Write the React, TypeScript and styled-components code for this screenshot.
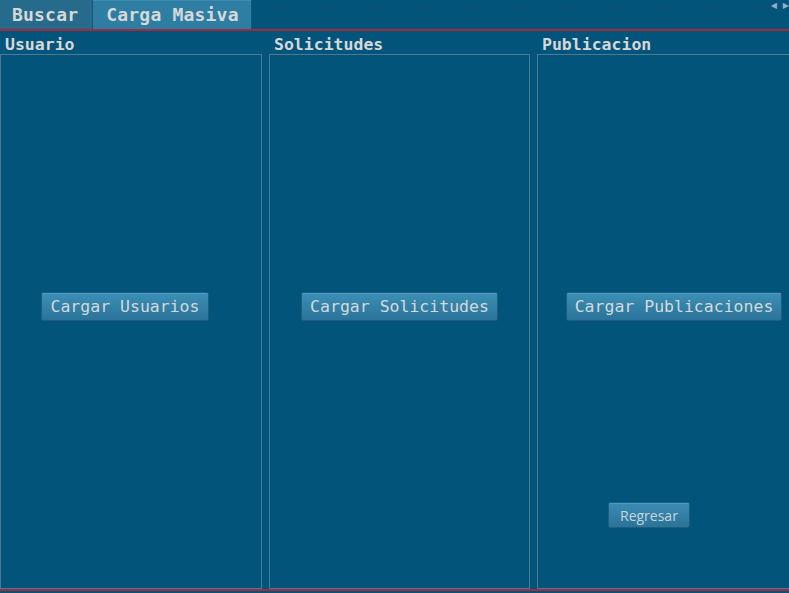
import styled, { createGlobalStyle } from "styled-components";

const Global = createGlobalStyle`
  html, body {
    margin: 0;
    padding: 0;
    background: #03547b;
    overflow: hidden;
  }
`;

const Frame = styled.div`
  width: 789px;
  height: 593px;
  display: flex;
  flex-direction: column;
  background: #03547b;
  overflow: hidden;
`;

const TabBar = styled.div`
  height: 29px;
  display: flex;
  align-items: stretch;
  border-bottom: 2px solid #a3293f;
  background-color: #03547b;
  background-image: radial-gradient(circle, #1b4c68 0.8px, transparent 1.2px);
  background-size: 12px 12px;
  background-position: 4px 2px;
  position: relative;
`;

const Tab = styled.div<{ $active?: boolean }>`
  display: flex;
  align-items: center;
  padding: 0 ${(p) => (p.$active ? "12px 0 13px" : "14px 0 12px")};
  font-family: "DejaVu Sans Mono", monospace;
  font-weight: bold;
  font-size: 18px;
  letter-spacing: 0.2px;
  color: #d6d8d8;
  background: ${(p) => (p.$active ? "#2e7ea4" : "#276b8c")};
  border-right: 1px solid #1c5675;
  box-shadow: ${(p) => (p.$active ? "inset 0 1px 0 #3b8db3" : "none")};
`;

const Scrollers = styled.div`
  position: absolute;
  right: 0;
  top: 1px;
  display: flex;
  gap: 6px;
  font-size: 8px;
  color: #8fb1c4;
  font-family: "DejaVu Sans", sans-serif;
`;

const Body = styled.div`
  flex: 1;
  display: grid;
  grid-template-columns: 262px 261px 280px;
  column-gap: 7px;
  border-bottom: 2px solid #a3293f;
  margin-bottom: 2px;
`;

const Column = styled.div`
  display: flex;
  flex-direction: column;
  min-height: 0;
`;

const Label = styled.div`
  height: 23px;
  padding: 0 0 0 5px;
  display: flex;
  align-items: flex-end;
  font-family: "DejaVu Sans Mono", monospace;
  font-weight: bold;
  font-size: 16.5px;
  color: #d6d8d8;
  line-height: 18px;
`;

const Box = styled.div`
  flex: 1;
  border: 1px solid #4b7a92;
  padding-bottom: 30px;
  display: grid;
  grid-template-rows: 1fr auto 1fr;
  justify-items: center;
`;

const Button = styled.button`
  grid-row: 2;
  height: 29px;
  padding: 0 8px;
  font-family: "DejaVu Sans Mono", monospace;
  font-size: 16.5px;
  color: #d3dadd;
  background: linear-gradient(#3c8fb6, #2b7399);
  border: 1px solid #1d5d80;
  border-radius: 2px;
  box-shadow: inset 0 1px 0 #4e9cc0;
  cursor: pointer;
`;

const Footer = styled.div`
  grid-row: 3;
  justify-self: stretch;
  display: flex;
  align-items: flex-end;
  padding: 0 0 30px 70px;
`;

const SmallButton = styled.button`
  height: 26px;
  padding: 0 11px;
  font-family: "Open Sans", "Noto Sans", sans-serif;
  font-size: 14px;
  color: #c9d5db;
  background: linear-gradient(#3a8cb3, #2b7399);
  border: 1px solid #1d5d80;
  border-radius: 2px;
  box-shadow: inset 0 1px 0 #4e9cc0;
`;

const columns = [
  { label: "Usuario", action: "Cargar Usuarios", shift: -6 },
  { label: "Solicitudes", action: "Cargar Solicitudes", shift: 0 },
  { label: "Publicacion", action: "Cargar Publicaciones", shift: -3 },
];

export default function App() {
  return (
    <Frame>
      <Global />
      <TabBar>
        <Tab>Buscar</Tab>
        <Tab $active>Carga Masiva</Tab>
        <Scrollers>
          <span>◀</span>
          <span>▶</span>
        </Scrollers>
      </TabBar>
      <Body>
        {columns.map((c, i) => (
          <Column key={c.label}>
            <Label>{c.label}</Label>
            <Box>
              <Button style={{ transform: `translateX(${c.shift}px)` }}>{c.action}</Button>
              {i === 2 && (
                <Footer>
                  <SmallButton>Regresar</SmallButton>
                </Footer>
              )}
            </Box>
          </Column>
        ))}
      </Body>
    </Frame>
  );
}
